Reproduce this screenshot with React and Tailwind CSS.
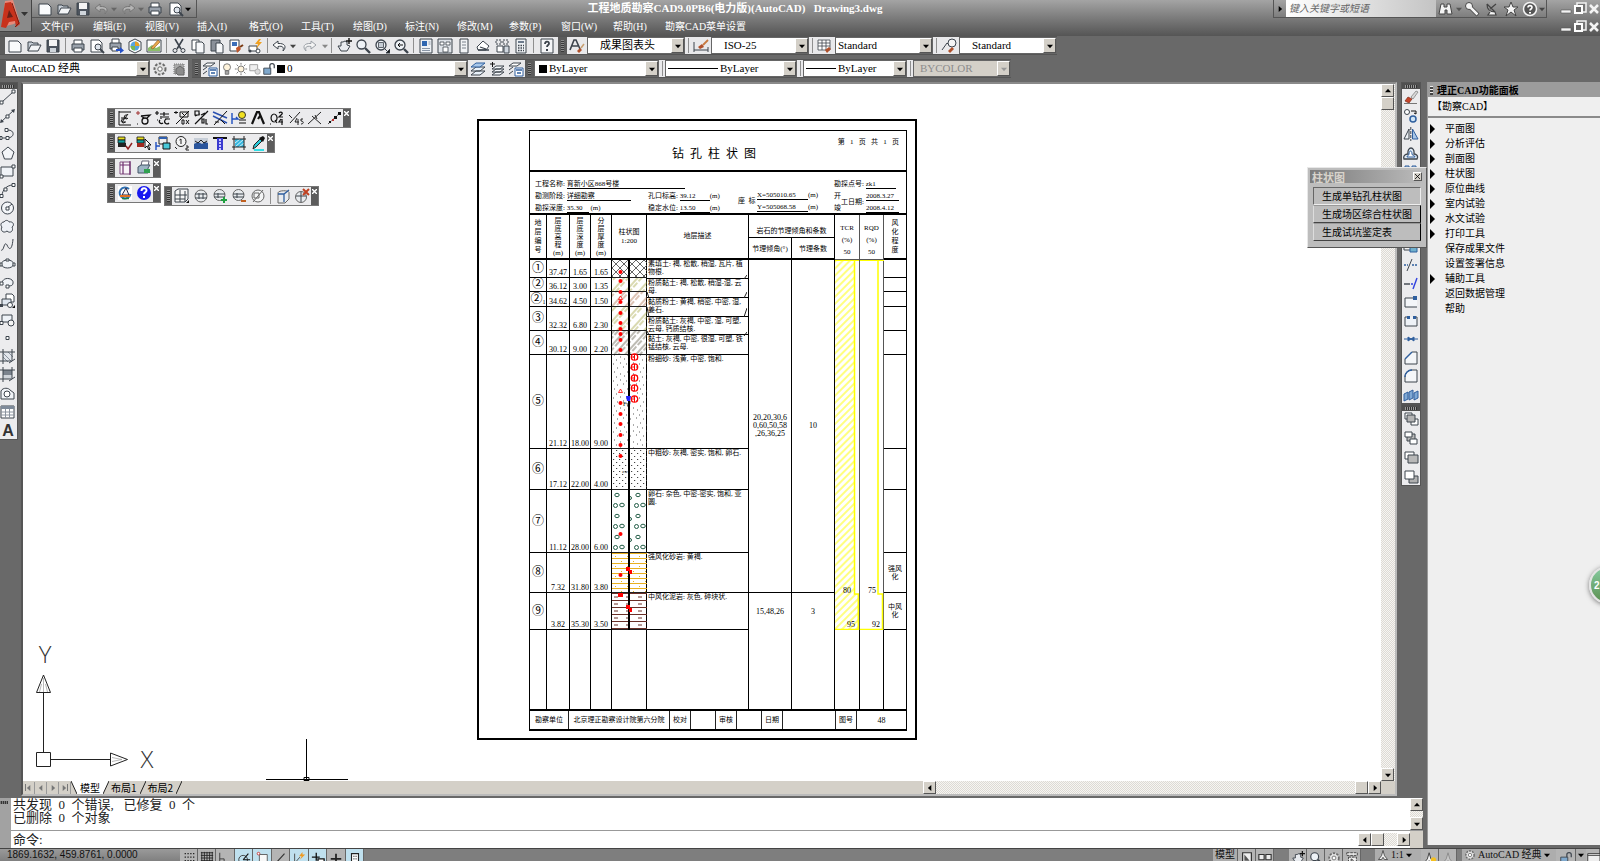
import React from "react";

const D = "#3d444d";
const B = "#2f5f9e";
const L = "#dfe5ec";
const F = "font-['Liberation_Serif','Noto_Sans_CJK_SC',serif]";

/* 16x16 tool glyphs */
const G = {
  new: <path d="M2 3h9l3 3v8H2z" fill="#fafbfc" stroke={D} />,
  open: <><path d="M2 13V4h4l1 1h5v2" fill="#c9d0d8" stroke={D} /><path d="M2 13l3-6h10l-3 6z" fill="#f3f5f7" stroke={D} /></>,
  save: <><path d="M2 2h12v12H2z" fill="#4d545e" stroke={D} /><path d="M4 2h8v6H4z" fill="#f4f4f4" /><path d="M5 10h6v4H5z" fill="#cfd5db" /></>,
  print: <><path d="M4 2h8v5H4z" fill="#fff" stroke={D} /><path d="M2 6h12v6H2z" fill="#9aa2ac" stroke={D} /><path d="M4 10h8v4H4z" fill="#fff" stroke={D} /></>,
  preview: <><path d="M2 2h8l3 3v9H2z" fill="#fff" stroke={D} /><circle cx="9" cy="9" r="3" fill={L} stroke={D} /><path d="M11 11l4 4" stroke={D} strokeWidth="2" /></>,
  publish: <><path d="M4 1h7v5H4z" fill="#fff" stroke={D} /><path d="M2 5h11v6H2z" fill="#9aa2ac" stroke={D} /><path d="M4 9h6v4H4z" fill="#fff" stroke={D} /><path d="M8 11h4V9l4 3.500-4 3V13H8z" fill="#2450c8" /></>,
  globe: <><path d="M2 4l6-3 6 3v8l-6 3-6-3z" fill="#fff" stroke={D} /><circle cx="8" cy="8" r="4.500" fill="#58a4e0" /><path d="M8 8V3.500A4.500 4.500 0 0 1 12.500 8z" fill="#e8a020" /><path d="M8 8v4.500A4.500 4.500 0 0 1 3.500 8z" fill="#7bb852" /></>,
  markup: <><path d="M1 2h14v12H1z" fill="#fff" stroke={D} /><path d="M2 10l4-3 4 3 4-2v5H2z" fill="#8dbf6a" /><path d="M5 10l7-8 2 2-7 7z" fill="#e8a84c" stroke="#8a5a20" strokeWidth=".6" /></>,
  cut: <><path d="M4 1l6 10M12 1L6 11" stroke={D} strokeWidth="1.600" /><circle cx="4" cy="12.500" r="2" fill="none" stroke={D} /><circle cx="12" cy="12.500" r="2" fill="none" stroke={D} /></>,
  copy: <><path d="M2 2h7v10H2z" fill="#fff" stroke={D} /><path d="M6 4h6l2 2v9H6z" fill="#f7f8fa" stroke={D} /></>,
  paste: <><path d="M2 2h9v11H2z" fill="#8a9099" stroke={D} /><path d="M7 5h5l2 2v8H7z" fill="#f7f8fa" stroke={D} /></>,
  match: <><path d="M2 2h9v11H2z" fill="#fff" stroke={D} /><path d="M4 4h5v4H4z" fill="#3c6eb8" /><path d="M8 10l3-2 2 3-4 4z" fill="#c2562a" /><path d="M12 9l3-2" stroke="#7a3a12" strokeWidth="2" /></>,
  block: <><path d="M2 8h8v5H2z" fill="#fff" stroke={D} /><circle cx="11" cy="13" r="2" fill="#fff" stroke={D} /><circle cx="3" cy="13" r="1.500" fill={D} /><path d="M12 1l-4 5h3l-2 5 6-7h-3l2-3z" fill="#f0a020" /></>,
  undo: <path d="M6 3L1 7l5 4V8.500c5-1 6 1 5 4.500 4-4 2-8-5-7.500z" fill="#fafafa" stroke={D} />,
  redo: <path d="M10 3l5 4-5 4V8.500c-5-1-6 1-5 4.500-4-4-2-8 5-7.500z" fill="#f4f4f4" stroke="#9a9fa6" />,
  undog: <path d="M6 3L1 7l5 4V8.500c5-1 6 1 5 4.500 4-4 2-8-5-7.500z" fill="#b4b4b4" stroke="#777" />,
  redog: <path d="M10 3l5 4-5 4V8.500c-5-1-6 1-5 4.500-4-4-2-8 5-7.500z" fill="#b4b4b4" stroke="#777" />,
  pan: <><path d="M2 8l3 5h6l3-5-3-1V4L9 3 7 4 5 4v4z" fill="#e8ebef" stroke={D} /><path d="M10 3h6M13 0v6" stroke="#111" strokeWidth="1.400" /></>,
  zoom: <><circle cx="6.500" cy="6.500" r="4.500" fill="#eef2f6" stroke={D} strokeWidth="1.300" /><path d="M10 10l5 5" stroke={D} strokeWidth="2.400" /></>,
  zoomw: <><circle cx="7" cy="7" r="5" fill="#eef2f6" stroke={D} strokeWidth="1.300" /><path d="M4.500 4.500h5v5h-5z" fill="#c7ced6" stroke={D} strokeWidth=".8" /><path d="M11 11l2 2M12 15h4v-4z" stroke={D} fill="#111" /></>,
  zoomp: <><circle cx="7" cy="7" r="5" fill="#eef2f6" stroke={D} strokeWidth="1.300" /><path d="M10 7H5l2-2M5 7l2 2" stroke="#111" fill="none" /><path d="M11 11l4 4" stroke={D} strokeWidth="2.400" /></>,
  props: <><path d="M2 1h12v14H2z" fill="#eef1f5" stroke={D} /><path d="M4 3h5v5H4z" fill="#2f66b0" /><path d="M10.500 4h2M10.500 6h2M4 10.500h8M4 12.500h8" stroke="#8a96a6" /></>,
  center: <><path d="M1 1h14v14H1z" fill="#dfe3e8" stroke={D} /><path d="M3 4h4v3H3zM9 4h4v3H9zM6 9h5v5H6z" fill="#fff" stroke={D} strokeWidth=".8" /></>,
  palette: <><path d="M4 1h8v14H4z" fill="#f1f3f5" stroke={D} /><path d="M6 4h4M6 7h4M6 10h4" stroke="#7a828c" /></>,
  sheet: <><path d="M2 9l6-6 6 5-3 4H3z" fill="#fff" stroke={D} /><path d="M3 12h11M5 9l6 2" stroke={D} strokeWidth="1.300" /></>,
  tree: <><path d="M2 2h5v4H2zM9 2h5v4H9z" fill="none" stroke={D} strokeDasharray="2 1" /><path d="M3 8h6v6H3z" fill="#fff" stroke={D} /><path d="M10 8h5v7h-5z" fill="#cfd6de" stroke={D} /></>,
  calc: <><path d="M3 1h10v14H3z" fill="#eef1f4" stroke={D} /><path d="M5 3h6v2H5z" fill="#6c7a8c" /><path d="M5 7.500h6M5 10h6M5 12.500h6" stroke={D} strokeDasharray="1.500 1" strokeWidth="1.400" /></>,
  helpbox: <><path d="M2 1h12v14H2z" fill="#f5f6f8" stroke={D} /><path d="M6 6c0-3 4-3 4-.6 0 1.600-2 1.600-2 3.600" stroke={D} strokeWidth="1.800" fill="none" /><path d="M7 11h2v2H7z" fill={D} /></>,
  tstyle: <><path d="M1 12L5 2h2l4 9M3 8h6" stroke={D} fill="none" strokeWidth="1.600" /><path d="M8 13l3-3 2 2-3 3z" fill="#b0502a" /><path d="M12 10l3-4" stroke="#c8a070" strokeWidth="1.500" /></>,
  dstyle: <><path d="M1 4v10M15 9v5M1 12h14" stroke={D} /><path d="M5 9l4-3 2 3-4 2z" fill="#b0502a" /><path d="M10 7l5-5" stroke="#c87a40" strokeWidth="1.800" /></>,
  tbstyle: <><path d="M1 2h12v10H1zM1 5h12M1 8h12M5 2v10M9 2v10" fill="#fff" stroke={D} strokeWidth=".8" /><path d="M8 12l4-3 2 2-4 4z" fill="#b0502a" /></>,
  mstyle: <><circle cx="11" cy="5" r="4" fill="#f5f5f5" stroke={D} /><path d="M1 12l5-7 2 2" fill="none" stroke={D} /><path d="M7 13l4-4 2 2-4 4z" fill="#b0502a" /></>,
  gear: <><circle cx="8" cy="8" r="5.500" fill="#e2e2e2" stroke="#6b6b6b" strokeWidth="2" strokeDasharray="2.500 1.500" /><circle cx="8" cy="8" r="2.200" fill="#fff" stroke="#6b6b6b" /></>,
  wsp: <><path d="M3 3h10v10H3z" fill="#a8a8a8" stroke="#777" strokeDasharray="1 1" /><path d="M5 12V8l4-3 4 3v6H7z" fill="#8c8c8c" stroke="#666" /></>,
  layerp: <><path d="M1 5l4-3h8l-4 3zM1 9l4-3M1 13l4-3" fill="#fff" stroke={D} /><path d="M7 7h8v8H7z" fill="#fff" stroke={B} /><path d="M8 9h6M9 12h4" stroke={B} strokeWidth="1.400" /></>,
  layers: <><path d="M1 14l5-4h9l-5 4zM1 10l5-4h9l-5 4z" fill="#e9f1fa" stroke={D} /><path d="M1 6l5-4h9l-5 4z" fill="#a9c8ea" stroke={B} /></>,
  layerb: <><path d="M3 14l4-3h8l-4 3zM3 11l4-3h8l-4 3zM3 8l4-3h8l-4 3z" fill="#f5f8fb" stroke={D} /><path d="M1 3h5M3.500 1v5" stroke="#111" /></>,
  bulb: <><circle cx="8" cy="6" r="4" fill="#fff4dc" stroke="#6a6a6a" /><path d="M6 10h4v4H6z" fill="#a8a8a8" stroke="#6a6a6a" /></>,
  sun: <><circle cx="8" cy="8" r="3.500" fill="#fff4dc" stroke="#666" /><path d="M8 1v2M8 13v2M1 8h2M13 8h2M3 3l1.500 1.500M11.500 11.500L13 13M13 3l-1.500 1.500M4.500 11.500L3 13" stroke="#666" /></>,
  vp: <><path d="M2 3h9v7H2z" fill="#eee" stroke="#999" /><circle cx="11" cy="11" r="3" fill="#ddd" stroke="#aaa" /></>,
  unlock: <><path d="M2 7h8v7H2z" fill="#7fa8cc" stroke={D} /><path d="M9 7V4c0-3 5-3 5 0v3" fill="none" stroke={D} strokeWidth="1.400" /></>,
  /* draw */
  line: <><path d="M2 13L13 3" stroke={D} /><path d="M0 12h3v3H0zM12 1h3v3h-3z" fill="#fff" stroke={D} /></>,
  xline: <><path d="M1 14L14 2" stroke={D} /><path d="M0 15l1-4 3 3zM15 1l-4 1 3 3z" fill={D} /><path d="M6 7h3v3H6z" fill="#fff" stroke={D} /></>,
  pline: <><path d="M0 12h7c8 0 8-8 1-8" fill="none" stroke={D} /><path d="M6 10.500h3v3H6zM5 2.500h3v3H5zM0 10.500h2v3H0z" fill="#fff" stroke={D} /></>,
  poly: <path d="M8 2l6 5-2.500 7h-7L2 7z" fill="#f4f6f9" stroke={D} />,
  rect: <><path d="M1 4h12v9H1z" fill="#f0f3f7" stroke={D} /><path d="M0 12h3v3H0zM12 2h3v3h-3z" fill="#fff" stroke={D} /></>,
  arc: <><path d="M2 14C2 8 7 3 13 3" fill="none" stroke={D} /><path d="M0 12.500h3v3H0zM12 1.500h3v3h-3zM4 6h3v3H4z" fill="#fff" stroke={D} /></>,
  circ: <><circle cx="7.500" cy="8" r="6" fill="#f4f6f9" stroke={D} /><path d="M7 8l5-4" stroke={D} /><path d="M6 7h3v3H6z" fill="#fff" stroke={D} /></>,
  cloud: <path d="M4 3c2-3 5-1 5 0 4-1 6 3 3 5 2 4-2 7-5 4-4 3-7-1-5-4-2-2-1-5 2-5z" fill="#eef1f6" stroke={D} />,
  spline: <path d="M1 13c3 2 3-10 6-5 2 5 5 6 6-6" fill="none" stroke={D} />,
  ell: <><ellipse cx="7.500" cy="8" rx="6" ry="4" fill="#f0f3f7" stroke={D} /><path d="M6 3h3v2H6zM0 7h2v3H0zM13 7h2v3h-2z" fill="#fff" stroke={D} /></>,
  ella: <><path d="M2 9C3 2 14 4 13 9c0 3-3 3-6 3" fill="#f0f3f7" stroke={D} /><path d="M0 8h3v3H0zM6 11h3v3H6z" fill="#fff" stroke={D} /></>,
  ins: <><path d="M6 1h6l2 2v6H6z" fill="#fff" stroke={D} /><path d="M2 6h9v6H2z" fill="#dfe6ef" stroke={D} /><circle cx="10" cy="12" r="2.500" fill="#fff" stroke={D} /><path d="M12 15h3v-3z" fill="#111" /><path d="M0 11h3v3H0z" fill={D} /></>,
  mkb: <><path d="M2 3h10v7H2z" fill="#eef2f7" stroke={D} /><circle cx="11" cy="11" r="3" fill="#f5f5f5" stroke={D} /><path d="M0 9.500h3v3H0z" fill="#fff" stroke={D} /></>,
  pt: <path d="M6 6.500h3v3H6z" fill="#fff" stroke={D} />,
  hatch: <><path d="M3 3h9v9H3z" fill="#e2e6ec" /><path d="M3 8l5 5M3 4l9 9M8 3l5 5" stroke="#8b949f" /><path d="M3 0v15M12 0v12M0 3h15M0 12h11M9 14l6-4" stroke={D} /></>,
  grad: <><path d="M3 3h9v5H3z" fill="#7b838d" /><path d="M3 8h9v4H3z" fill="#cfd4da" /><path d="M3 0v15M12 0v12M0 3h15M0 12h11M9 14l6-4" stroke={D} /></>,
  region: <><path d="M1 13V5c2-4 8-3 9-1l4 3v6z" fill="#f0f3f7" stroke={D} /><circle cx="7" cy="8" r="3" fill="#fff" stroke={D} /></>,
  table: <><path d="M1 2h13v12H1z" fill="#fff" stroke={D} /><path d="M1 2h13v3H1z" fill="#7f8b9a" /><path d="M1 8h13M1 11h13M5.500 5v9M9.500 5v9" stroke="#8b949f" /></>,
  /* modify */
  erase: <><path d="M8 8l5-6 2 1-5 7z" fill="#d9d9d9" stroke="#777" strokeWidth=".7" /><path d="M5 8l4 2-3 4-4-2z" fill="#c8452a" stroke="#7a2a18" strokeWidth=".7" /><path d="M1 14.500h13" stroke="#777" /></>,
  cpy: <><circle cx="4" cy="4" r="2.500" fill="#fff" stroke={D} /><path d="M8 3h5v3l-2-1" stroke="#111" fill="none" /><circle cx="10" cy="11" r="3" fill="#cfe4f6" stroke={B} strokeWidth="1.500" /></>,
  mirror: <><path d="M6 3v10H1z" fill="#eef2f6" stroke={D} /><path d="M9.500 3v10H15z" fill="#a8c6e8" stroke={B} /><path d="M7.800 1v14" stroke={D} strokeDasharray="3 1" /></>,
  offset: <><path d="M1 14h13c2-4-2-5-3-5 1-8-7-8-6 0-3 0-5 2-4 5z" fill="#dfe9f4" stroke={D} strokeWidth="1.300" /><path d="M4 12h8c0-2-3-1-3-3 0-4-3-4-3 0 0 2-2 1-2 3z" fill="#fff" stroke={B} /></>,
  array: <path d="M2 2h4v4H2zM9 2h4v4H9zM2 9h4v4H2zM9 9h4v4H9z" fill="#a9bdd4" stroke={B} />,
  move: <path d="M8 1v14M1 8h14M8 1L6 3h4zM8 15l-2-2h4z" stroke={B} fill={B} />,
  rotate: <path d="M13 8a5 5 0 1 1-5-5h4" fill="none" stroke={B} strokeWidth="1.500" />,
  scale: <path d="M2 6h8v8H2zM6 2h8v8" fill="#e4edf7" stroke={B} />,
  stretch: <><path d="M1 4h8v8H1z" fill="#f2f2f2" stroke={D} /><path d="M7 7l7-1v8H7z" fill="#6fb0cc" stroke={B} /></>,
  trim: <><path d="M1 8h4M9 8h6" stroke={B} strokeDasharray="2 1" strokeWidth="1.400" /><path d="M4 14l5-12" stroke={D} /></>,
  extend: <><path d="M1 9h6" stroke={D} strokeWidth="1.400" /><path d="M8 9h3" stroke="#3040e0" strokeDasharray="2 1" strokeWidth="1.400" /><path d="M10 14l4-11" stroke="#3040e0" strokeWidth="1.400" /></>,
  brkpt: <><path d="M14 4H2v9h12" fill="#f4f6f9" stroke={D} /><path d="M10 2h4v4h-4z" fill={B} /></>,
  brk: <><path d="M4 4H2v9h12V4h-2" fill="#eef2f7" stroke={D} /><path d="M4 3h3v3H4zM10 3h3v3h-3z" fill={B} /></>,
  join: <path d="M1 8h14M5 6v4l3-2zM11 6v4L8 8z" stroke={B} fill={B} />,
  chamfer: <><path d="M2 14V9l7-7h5v12z" fill="#f4f6f9" stroke={D} /><path d="M2 9l7-7" stroke={B} strokeWidth="1.500" /></>,
  fillet: <><path d="M2 14V9c0-4 3-7 7-7h5v12z" fill="#f4f6f9" stroke={D} /><path d="M2 9c0-4 3-7 7-7" stroke={B} strokeWidth="1.500" fill="none" /></>,
  explode: <path d="M1 7l4-2v7l-4 2zM6 5l4-2v8l-4 2zM11 6l4-2v7l-4 2z" fill="#7fa8d4" stroke={B} />,
  ord1: <><path d="M2 2h7v6H2z" fill="#fff" stroke={D} /><path d="M8 8h7v6H8z" fill="#fff" stroke={D} /><path d="M4 4h8v7H4z" fill="#b4b4b4" stroke={D} /></>,
  ord2: <><path d="M4 4h8v7H4z" fill="#b8b8b8" stroke={D} /><path d="M2 2h7v5H2zM7 9h7v5H7z" fill="#fff" stroke={D} /></>,
  ord3: <><path d="M2 2h9v7H2z" fill="#fff" stroke={D} /><path d="M5 5h10v8H5z" fill="#b8b8b8" stroke={D} /></>,
  ord4: <><path d="M6 7h9v7H6z" fill="#b0b0b0" stroke={D} /><path d="M2 2h9v8H2z" fill="#fff" stroke={D} /></>,
  /* survey bars */
  s1: <path d="M2 1v14h12M2 2h12M4 8h6M5 12h4M11 4l-6 8M10 5a2 2 0 1 0 1 3M7 9a2 2 0 1 0 1 3" fill="none" stroke="#111" strokeWidth="1" />,
  s2: <><path d="M5 6l9-1-3 3M5 6l3 2" fill="none" stroke="#111" strokeWidth="1.300" /><circle cx="9" cy="11" r="3" fill="none" stroke="#111" strokeWidth="1.300" /><path d="M2 1v4M0 3h4" stroke="#a03030" /><path d="M1 14h1" stroke="#111" /></>,
  s3: <path d="M2 1v4M0 3h4M5 4h9M7 7h7M2 10h1M6 6v3M9 2v4M5 10a2 2 0 1 0 3 3M13 9a2.500 2.500 0 1 0 1 4M10 9h5" fill="none" stroke="#111" strokeWidth="1.200" />,
  s4: <path d="M2 1v3M0 2.500h4M6 2h8v5H6zM8 3l3 3M15 1L2 14M8 10v4h2v-4zM12 10l3 4M15 10l-3 4" fill="none" stroke="#111" />,
  s5: <path d="M2 1h4v4H2zM2 6l5-2M15 1L2 14M9 9v4h2V9zM13 9v5h2M8 5l4-2" fill="none" stroke="#111" strokeWidth="1.200" />,
  s6: <><path d="M1 2l14 6M1 6l14 7" stroke="#2a50b0" strokeWidth="1.500" /><path d="M15 1L2 15M3 12h4M9 10l4 4" stroke="#111" /></>,
  s7: <><circle cx="11" cy="5" r="3.500" fill="#f0e020" stroke="#333" /><path d="M1 3v11M1 9h6l-2-2" stroke="#2050c0" fill="none" strokeWidth="1.400" /><path d="M8 10h7M8 13h7" stroke="#111" /></>,
  s8: <path d="M2 14L7 2h2l5 12M10 6l-2 3" fill="none" stroke="#111" strokeWidth="2.200" />,
  s9: <path d="M5 4a3 4 0 1 0 .1 0M6 10l2 3M10 3c2-2 4 0 3 1l-3 3h4M12 9l-2 3h4M13 9v6M1 14h1" stroke="#111" strokeWidth="1.200" />,
  s10: <path d="M2 13L12 2M1 5l3 3M9 8l-2 4h4M10 9v6M15 9h-2v2c3 0 3 3 0 3" stroke="#222" />,
  s11: <path d="M1 14L14 2M5 6l9 8M8 5l2 4" stroke="#222" fill="none" />,
  s12: <><path d="M2 14L15 2" stroke="#555" strokeDasharray="2 1" /><path d="M3 11h2v2H3zM8 6h3v3H8zM12 2h3v3h-3z" fill="#111" /><path d="M6 9h2v2H6z" fill="#c03030" /></>,
  t1: <><path d="M1 2h7v3H1z" fill="#e8e020" stroke="#111" strokeWidth=".8" /><path d="M1 5h7v3H1z" fill="#10a0a0" stroke="#111" strokeWidth=".8" /><path d="M1 8h8v4H1z" fill="#222" /><path d="M9 11l2 3 4-6" stroke="#902020" fill="none" strokeWidth="1.500" /></>,
  t2: <><path d="M1 2h7v3H1z" fill="#e8e020" stroke="#111" strokeWidth=".8" /><path d="M1 5h7v3H1z" fill="#10a0a0" stroke="#111" strokeWidth=".8" /><path d="M1 8h7v4H1z" fill="#a02a20" /><path d="M9 4v9l2-2 2 4 1-1-2-4h3z" fill="#fff" stroke="#111" /></>,
  t3: <><path d="M4 2h8v7H4z" fill="#eee" stroke="#222" /><path d="M4 2h8v2H4z" fill="#3060b0" /><path d="M8 8h7v6H8z" fill="#48c8d8" stroke="#111" /><path d="M1 7v8M1 11h4" stroke="#2050c0" strokeWidth="1.400" /></>,
  t4: <><circle cx="7" cy="6.500" r="5" fill="#f4f4f4" stroke="#222" /><path d="M7 4v5M5.500 5L7 4M1 12l2 2" stroke="#222" fill="none" /><path d="M12 11h2v2h-2v2h3" stroke="#222" fill="none" /></>,
  t5: <><path d="M1 3h14v11H1z" fill="#2a559c" /><path d="M1 3h14v5l-3-1-3 2-4-2-4 2z" fill="#c8cfd8" /><path d="M2 6l3 2 3-3 3 3 3-2" stroke="#222" fill="none" /></>,
  t6: <><path d="M1 3h14" stroke="#111" strokeWidth="2" /><path d="M5 3h6v12H5z" fill="#3a3ad0" /><path d="M8 4v11" stroke="#c8c8ff" strokeDasharray="2 1" strokeWidth="2" /></>,
  t7: <><path d="M4 4h9v8H4z" fill="#38b8e0" /><path d="M4 12l9-8M4 8l5-4M8 12l5-4" stroke="#fff" strokeWidth=".8" /><path d="M3 1v14M13 1v14M1 4h14M1 12h14" stroke="#222" /></>,
  t8: <><path d="M4 15h10" stroke="#30e0e8" strokeWidth="2" /><path d="M3 14l1-4 6-6 2 2-6 6z" fill="#28c8d8" stroke="#222" /><path d="M9 3l4-2 2 2-2 4z" fill="#111" /></>,
  u1: <><path d="M3 2h10v12H3z" fill="#f8f4f8" stroke="#805080" /><path d="M6 2v12M3 5h10M13 1v14" stroke="#703070" strokeWidth="1.200" /></>,
  u2: <><path d="M6 1h7l-1 5H5z" fill="#fff" stroke="#667" /><path d="M2 7l3-2h9l-2 3v5H2z" fill="#9cb4c4" stroke="#456" /><path d="M8 9h6v4H8z" fill="#30a050" /></>,
  u3: <><path d="M1 1h14v14H1z" fill="#fff" /><path d="M12 4A5.500 5.500 0 1 0 13.500 9" fill="none" stroke="#3070b0" strokeWidth="2" /><path d="M5 10l4-7 3 7z" fill="#f2f2f2" stroke="#224" /><path d="M3 11h10" stroke="#e07020" strokeWidth="2" /><path d="M5 13.500h7" stroke="#208040" strokeWidth="1.500" /></>,
  u4: <><circle cx="8" cy="8" r="7" fill="#1818f0" /><path d="M5.500 6c0-3.500 5-3.500 5-.6 0 1.800-2.500 2-2.500 3.800" stroke="#fff" strokeWidth="2" fill="none" /><path d="M7 11h2v2H7z" fill="#fff" /></>,
  m1: <><path d="M1 3l3-2h10v10l-3 3H1z" fill="#f5f5f5" stroke={D} /><path d="M6 2v12M11 3v11M1 7h12M1 11h10" stroke={D} /><path d="M12 15h3v-3z" fill="#111" /></>,
  m2: <><circle cx="8" cy="8" r="6" fill="#e8ebee" stroke="#666" /><path d="M2 6h12M2 10h12M6 5v6M10 5v6" stroke={D} /></>,
  m3: <><circle cx="7.500" cy="7" r="5.500" fill="#e8ebee" stroke="#666" /><path d="M2 6h11M2 9h11M6 5v5" stroke={D} /><path d="M9 12h6M12 9v6" stroke="#20a040" strokeWidth="2" /></>,
  m4: <><circle cx="7.500" cy="7" r="5.500" fill="#e8ebee" stroke="#666" /><path d="M2 6h11M2 9h11M6 5v5" stroke={D} /><path d="M10 13h5" stroke="#c06020" strokeWidth="2" /></>,
  m5: <><circle cx="8" cy="8" r="6" fill="#f4f5f6" stroke="#666" /><path d="M13 2L3 14M4 5h5v5H4z" stroke="#666" fill="none" /></>,
  m6: <><path d="M3 5c0-3 12-3 11 0v6l-4 4H3z" fill="#e8ebee" stroke="#666" /><path d="M3 6h6l5-4M9 6v8" stroke={B} strokeWidth="1.300" fill="none" /></>,
  m7: <><circle cx="7" cy="9" r="5.500" fill="#e8ebee" stroke="#666" /><path d="M2 8h10M7 4v10" stroke={D} /><path d="M9 1l6 6M15 1L9 7" stroke="#c04020" strokeWidth="2" /></>,
  /* title bar */
  binoc: <path d="M3 3h3v3h3V3h3l2 10H9V9H7v4H1z" fill="#f4f4f4" stroke="#444" />,
  key: <><circle cx="5" cy="5" r="3.500" fill="#f4f4f4" stroke="#444" /><path d="M7 7l7 7" stroke="#444" strokeWidth="4" /><path d="M6 6l7.500 7.500" stroke="#f4f4f4" strokeWidth="2.500" /></>,
  dish: <path d="M3 3c0 6 3 8 8 8l1 3H4l2-3M6 8l6-5M3 3l8 8" fill="#f4f4f4" stroke="#444" strokeWidth="1.200" />,
  star: <path d="M8 1l2 5h5l-4 3 2 6-5-4-5 4 2-6-4-3h5z" fill="#f4f4f4" stroke="#444" />,
  qm: <><circle cx="8" cy="8" r="6.500" fill="#555" stroke="#f4f4f4" strokeWidth="1.500" /><path d="M6 6.500c0-2.500 4-2.500 4 0 0 1.500-2 1.500-2 3" stroke="#fff" strokeWidth="1.600" fill="none" /><path d="M7 11h2v1.500H7z" fill="#fff" /></>,
  min: <path d="M3 9h10v3H3z" fill="#f4f4f4" stroke="#555" strokeWidth=".6" />,
  max: <><path d="M5 2h9v9H5z" fill="#777" stroke="#f4f4f4" strokeWidth="1.500" /><path d="M3 5h7v7H3z" fill="#666" stroke="#fff" strokeWidth="2" /></>,
  x: <path d="M4 4l8 8M12 4l-8 8" stroke="#f4f4f4" strokeWidth="2.500" />,
  /* status */
  snap: <path d="M3 3h12M3 7h12M3 11h12M3 15h12" stroke="#222" strokeWidth="1.500" strokeDasharray="1.500 1.700" />,
  grid: <path d="M1 2h14M1 5h14M1 8h14M1 11h14M1 14h14M2 1v14M5 1v14M8 1v14M11 1v14M14 1v14" stroke="#222" />,
  ortho: <path d="M2 2v12h12M2 9h5v5" fill="none" stroke="#333" />,
  polar: <><circle cx="7" cy="10" r="5" fill="none" stroke="#333" /><path d="M7 10l6-7M7 10h8" stroke="#111" strokeWidth="1.300" /></>,
  osnap: <><path d="M5 4h9v11H5z" fill="#f8f8f8" stroke="#555" /><circle cx="4" cy="3" r="1.500" fill="#fff" stroke="#c03030" /></>,
  otrack: <path d="M2 14L12 3M2 14h12" stroke="#333" fill="none" strokeWidth="1.300" />,
  ducs: <><path d="M3 3v11h9M3 14l6-7" stroke="#444" fill="none" /><path d="M12 1l-4 5h3l-2 4 6-6h-3z" fill="#f09a20" /></>,
  dyn: <path d="M6 2v9M1 7h9M8 9h7v4H8z" stroke="#111" fill="#fff" strokeWidth="1.500" />,
  lwt: <path d="M8 3v9M2 9h12" stroke="#222" strokeWidth="2" />,
  qp: <><path d="M4 3h8v11H4z" fill="#fff" stroke="#222" strokeWidth="1.300" /><path d="M6 6h4M6 9h4M6 12h4" stroke="#222" strokeDasharray="1.500 1" /></>,
  layo: <><path d="M3 2h10v11H3z" fill="#eee" stroke="#333" strokeWidth="1.400" /><path d="M5 4l6 7H5z" fill="#555" /></>,
  lays: <path d="M1 4h6v6H1zM9 4h6v6H9zM1 12h14" fill="#eee" stroke="#333" strokeWidth="1.300" />,
  show: <path d="M2 2h12v3H2zM4 7h9v8H4zM7 9v4l3-2z" fill="#eee" stroke="#333" strokeDasharray="3 1" />,
  ann: <path d="M8 2l-2 7-4 5h4l2-3 2 3h4l-4-5z" fill="#f4f4f4" stroke="#333" />,
  annb: <><path d="M7 2L5 9l-4 5h4l2-3 2 3h4L9 9z" fill="#f4f4f4" stroke="#333" /><circle cx="12" cy="10" r="3" fill="#f4c020" /></>,
  anng: <path d="M8 2L6 9l-4 5h4l2-3 2 3h4l-4-5z" fill="#c8c8c8" stroke="#888" />,
  clean: <path d="M2 3h14v11H2zM2 5h14" fill="#eee" stroke="#333" />,
};

const Icon = ({ n, s = "size-4" }) => (
  <svg viewBox="0 0 16 16" className={`${s} shrink-0`} fill="none" aria-hidden="true">{G[n]}</svg>
);
const Tool = ({ n, w = "w-[19px]" }) => (
  <button type="button" aria-label={n} className={`flex ${w} shrink-0 items-center justify-center`}><Icon n={n} /></button>
);
const Sep = () => <span className="my-px mr-[2px] ml-[3px] w-px shrink-0 self-stretch bg-[#8f8f8f]" />;
const Grip = () => (
  <span className="flex w-[9px] shrink-0 items-center justify-center self-stretch bg-[#5c5c5c]">
    <span className="h-3 w-[3px] bg-[repeating-linear-gradient(#8a8a8a_0_1px,#3a3a3a_1px_2px)]" />
  </span>
);
const Tri = ({ d = "down", c = "fill-black" }) => {
  const p = { down: "M0 2h7L3.500 6z", up: "M0 5h7L3.500 1z", left: "M5 0v7L1 3.500z", right: "M2 0v7l4-3.500z" }[d];
  return <svg viewBox="0 0 7 7" className={`size-[6px] shrink-0 ${c}`} aria-hidden="true"><path d={p} /></svg>;
};
const raised = "border border-t-white border-l-white border-r-[#555] border-b-[#555] bg-[#d4d0c8]";
const dither = "bg-[repeating-conic-gradient(#f6f5f2_0_25%,#dddad4_0_50%)] bg-[length:2px_2px]";
const Arrow = ({ d }) => (
  <button type="button" aria-label={`scroll ${d}`} className={`flex size-[13px] shrink-0 items-center justify-center ${raised}`}><Tri d={d} /></button>
);

const Combo = ({ label, value, w, lead, pad = "pl-2", off }) => (
  <span className={`flex h-[17px] shrink-0 items-center border border-[#666] ${w} ${off ? "bg-[#d4d0c8] text-[#8c8c8c]" : "bg-white text-black"}`}>
    {lead}
    <select aria-label={label} disabled={off} defaultValue={value} className={`h-full min-w-0 flex-1 appearance-none bg-transparent text-[11px] leading-[15px] opacity-100 outline-none ${pad} ${F}`}>
      <option>{value}</option>
    </select>
    <span className={`flex h-full w-[13px] items-center justify-center ${raised}`}><Tri c={off ? "fill-[#999]" : "fill-black"} /></span>
  </span>
);

const menus = ["文件(F)", "编辑(E)", "视图(V)", "插入(I)", "格式(O)", "工具(T)", "绘图(D)", "标注(N)", "修改(M)", "参数(P)", "窗口(W)", "帮助(H)", "勘察CAD菜单设置"];

const WinButtons = () => (
  <div className="flex w-[53px] shrink-0 items-center gap-px pl-3">
    {["min", "max", "x"].map((n) => <Tool key={n} n={n} w="w-[13px]" />)}
  </div>
);

function Header() {
  return (
    <header className="flex h-9 shrink-0 bg-gradient-to-b from-[#a4a4a4] to-[#555] text-white">
      <button type="button" aria-label="应用程序菜单" className="flex h-8 w-8 shrink-0 items-center border-r border-b border-[#444] bg-[#8a8a8a]">
        <svg viewBox="0 0 30 32" className="h-8 w-[30px]" aria-hidden="true">
          <path d="M5 1l8-1 6 20-5 4-12 3z" fill="#e88a7a" />
          <path d="M5 3L1 27l5 1 3-6 6-1 1 6 4-3L11 2z" fill="#c8321c" />
          <path d="M9 10l-2 8 6-1z" fill="#6a2018" />
          <path d="M15 27l4-4-7-20" fill="none" stroke="#7a1c10" />
          <path d="M21 12h7l-3.500 4z" fill="#333" />
        </svg>
      </button>
      <div className="flex min-w-0 flex-1 flex-col">
        <div className="flex h-[18px] items-stretch">
          <div className="flex w-[165px] shrink-0 items-center border-r border-b border-[#555] pl-[3px]">
            <Tool n="new" /><Tool n="open" /><Tool n="save" /><Tool n="undog" /><Tri c="fill-[#666]" />
            <Tool n="redog" w="w-[21px]" /><Tri c="fill-[#666]" /><Tool n="print" w="w-[22px]" /><Tool n="preview" /><Tri />
          </div>
          <h1 className={`flex-1 text-center text-[11px] leading-[17px] font-bold whitespace-pre ${F}`}>工程地质勘察CAD9.0PB6(电力版)(AutoCAD)   Drawing3.dwg</h1>
          <form className="flex w-[274px] shrink-0 items-center border border-t-0 border-[#555]">
            <span className="flex w-3 justify-center"><Tri d="right" /></span>
            <input aria-label="搜索" placeholder="键入关键字或短语" className={`h-full w-[150px] bg-gradient-to-r from-white to-[#c4c4c4] pl-[3px] text-[10px] italic placeholder:text-[#666] ${F}`} />
            <Tool n="binoc" w="w-[20px]" /><Tri c="fill-[#555]" /><Tool n="key" w="w-[20px]" /><Tool n="dish" /><Tool n="star" /><Tool n="qm" /><Tri c="fill-[#444]" />
          </form>
          <WinButtons />
        </div>
        <div className="flex h-[18px] items-center">
          <nav className={`flex flex-1 pl-[9px] text-[10px] leading-4 ${F}`}>
            {menus.map((m) => <button type="button" key={m} className="min-w-[52px] text-left whitespace-nowrap">{m}</button>)}
          </nav>
          <WinButtons />
        </div>
      </div>
    </header>
  );
}

const Bar = ({ children }) => <div className="flex h-[19px] items-center border-y border-[#555] bg-[#e9e9eb]">{children}</div>;
const Tools = ({ names }) => names.map((n) => <Tool key={n} n={n} />);

function Toolbars() {
  return (
    <div className="flex shrink-0 flex-col gap-[4px] pb-[4px]">
      <div className="flex">
        <Bar>
          <span className="w-[5px] self-stretch bg-[#5c5c5c]" />
          <Tools names={["new", "open", "save"]} /><Sep />
          <Tools names={["print", "preview", "publish", "globe", "markup"]} /><Sep />
          <Tools names={["cut", "copy", "paste", "match", "block"]} /><Sep />
          <Tool n="undo" w="w-[20px]" /><Tri c="fill-[#444]" /><Tool n="redo" w="w-[26px]" /><Tri c="fill-[#888]" /><Sep />
          <Tools names={["pan", "zoom", "zoomw", "zoomp"]} /><Sep />
          <Tools names={["props", "center", "palette", "sheet", "tree", "calc"]} /><Sep />
          <Tool n="helpbox" w="w-[22px]" />
        </Bar>
        <Bar>
          <Grip /><Tool n="tstyle" w="w-[20px]" /><Combo label="文字样式" value="成果图表头" w="w-[98px]" pad="pl-3" /><Sep />
          <Tool n="dstyle" w="w-[20px]" /><Combo label="标注样式" value="ISO-25" w="w-[98px]" pad="pl-3" /><Sep />
          <Tool n="tbstyle" w="w-[20px]" /><Combo label="表格样式" value="Standard" w="w-[98px]" pad="pl-[2px]" /><Sep />
          <Tool n="mstyle" w="w-[20px]" /><Combo label="引线样式" value="Standard" w="w-[98px]" pad="pl-3" />
        </Bar>
      </div>
      <div className="flex">
        <Bar>
          <span className="w-[5px] self-stretch bg-[#5c5c5c]" />
          <Combo label="工作空间" value="AutoCAD 经典" w="w-[145px]" pad="pl-1" />
          <Tool n="gear" /><Tool n="wsp" />
        </Bar>
        <span className="w-1" />
        <Bar>
          <Grip /><Tool n="layerp" w="w-[18px]" />
          <Combo label="图层" value="0" w="w-[249px]" pad="pl-[2px]" lead={<><Icon n="bulb" s="size-[14px]" /><Icon n="sun" s="size-[14px]" /><Icon n="vp" s="size-[14px]" /><Icon n="unlock" s="size-[14px]" /><span className="ml-px size-2 bg-black" /></>} />
          <Tools names={["layers", "layerb"]} /><Tool n="layerp" />
        </Bar>
        <Bar>
          <Grip />
          <Combo label="颜色" value="ByLayer" w="w-[125px]" pad="pl-[2px]" lead={<span className="ml-1 size-2 bg-black" />} /><Sep />
          <Combo label="线型" value="ByLayer" w="w-[132px]" pad="pl-[2px]" lead={<span className="ml-[2px] h-px w-[50px] bg-black" />} /><Sep />
          <Combo label="线宽" value="ByLayer" w="w-[104px]" pad="pl-[2px]" lead={<span className="ml-[2px] h-px w-[30px] bg-black" />} /><Sep />
          <Combo label="打印样式" value="BYCOLOR" w="w-[98px]" pad="pl-[6px]" off />
        </Bar>
      </div>
    </div>
  );
}

const VHead = () => (
  <span className="flex h-[6px] w-full items-center justify-center bg-[#505050]">
    <span className="h-[3px] w-3 bg-[repeating-linear-gradient(90deg,#999_0_1px,#333_1px_2px)]" />
  </span>
);
const VBar = ({ names, h }) => (
  <div className="flex flex-col border border-[#555] bg-[#ececee]">
    <VHead />
    <div className={`flex flex-col items-center justify-between ${h}`}>
      {names.map((n) => n === "A"
        ? <button type="button" key={n} className="font-['Liberation_Sans',sans-serif] text-[16px] leading-4 font-bold text-[#333]">A</button>
        : <Tool key={n} n={n} w="w-[15px]" />)}
    </div>
  </div>
);
const drawTools = ["line", "xline", "pline", "poly", "rect", "arc", "circ", "cloud", "spline", "ell", "ella", "ins", "mkb", "pt", "hatch", "grad", "region", "table", "A"];
const modTools = ["erase", "cpy", "mirror", "offset", "array", "move", "rotate", "scale", "stretch", "trim", "extend", "brkpt", "brk", "join", "chamfer", "fillet", "explode"];

const FloatBar = ({ names, pos }) => (
  <div className={`absolute ${pos} flex h-[20px] items-center border border-[#777] bg-[#ebebed]`}>
    <span className="flex w-[7px] items-center justify-center self-stretch bg-[#5c5c5c]"><span className="h-3 w-[3px] bg-[repeating-linear-gradient(#999_0_1px,#333_1px_2px)]" /></span>
    {names.map((n) => n === "|" ? <Sep key={n} /> : <Tool key={n} n={n} />)}
    <button type="button" aria-label="关闭" className="flex w-[7px] items-start justify-center self-stretch bg-[#5c5c5c] pt-[2px]">
      <svg viewBox="0 0 5 5" className="size-[5px]" aria-hidden="true"><path d="M0 0l5 5M5 0L0 5" stroke="#fff" strokeWidth="1.400" /></svg>
    </button>
  </div>
);

/* borehole log sheet */
const layers = [
  ["①", "", "37.47", "1.65", "1.65", "h-[18px]", ""],
  ["②", "", "36.12", "3.00", "1.35", "h-[14px]", ""],
  ["②", "1", "34.62", "4.50", "1.50", "h-[15px]", ""],
  ["③", "", "32.32", "6.80", "2.30", "h-[24px]", ""],
  ["④", "", "30.12", "9.00", "2.20", "h-[24px]", ""],
  ["⑤", "", "21.12", "18.00", "9.00", "h-[94px]", ""],
  ["⑥", "", "17.12", "22.00", "4.00", "h-[41px]", ""],
  ["⑦", "", "11.12", "28.00", "6.00", "h-[63px]", ""],
  ["⑧", "", "7.32", "31.80", "3.80", "h-[40px]", "强风化"],
  ["⑨", "", "3.82", "35.30", "3.50", "h-[37px]", "中风化"],
];
const notes = [
  [["素填土: 褐, 松散, 稍湿, 瓦片, 植", "物根."], "h-[19px]"],
  [["粉质黏土: 褐, 松散, 稍湿-湿, 云", "母."], "h-[19px]"],
  [["黏质粉土: 黄褐, 稍密, 中密, 湿,", "姜石."], "h-[19px]"],
  [["粉质黏土: 灰褐, 中密, 湿, 可塑,", "云母, 钙质结核."], "h-[18px]"],
  [["黏土: 灰褐, 中密, 很湿, 可塑, 铁", "锰结核, 云母."], "h-[20px]"],
  [["粉细砂: 浅黄, 中密, 饱和."], "h-[94px]"],
  [["中粗砂: 灰褐, 密实, 饱和, 卵石."], "h-[41px]"],
  [["卵石: 杂色, 中密-密实, 饱和, 亚", "圆."], "h-[63px]"],
  [["强风化砂岩: 黄褐."], "h-[40px]"],
  [["中风化泥岩: 灰色, 碎块状."], "h-[37px]"],
];

const diag = (id, color, g) => (
  <pattern id={id} width={g} height="8" patternUnits="userSpaceOnUse" patternTransform="rotate(42)">
    <path d="M1 0v8M4 0v6" stroke={color} strokeWidth=".8" />
  </pattern>
);
const dots = [12, 21, 32, 42, 53, 63, 69, 74, 80, 90, 143, 154, 164, 175, 185, 196, 274, 315];

const Lithology = () => (
  <svg viewBox="0 0 35 370" className="block h-[370px] w-[35px]" role="img" aria-label="柱状图">
    <defs>
      <pattern id="cross" width="8" height="8" patternUnits="userSpaceOnUse"><path d="M0 0l8 8M8 0L0 8" stroke="#555" strokeWidth=".9" /></pattern>
      {diag("olive", "#a0a038", 10)}
      {diag("brown", "#a86a44", 10)}
      {diag("dark", "#5a5440", 8)}
      <pattern id="fine" width="13" height="17" patternUnits="userSpaceOnUse"><path d="M1 2h1M8 1h1M5 6h1M11 5h1M2 10h1M8 12h1M4 15h1M12 14h1" stroke="#555" strokeWidth="1" /></pattern>
      <pattern id="coarse" width="6" height="6" patternUnits="userSpaceOnUse"><path d="M1 1.500h1.200M4 4.500h1.200" stroke="#444" strokeWidth="1.100" /></pattern>
      <pattern id="gravel" y="232" width="21" height="21" patternUnits="userSpaceOnUse">
        <g fill="none" stroke="#1f5a44" strokeWidth="1"><ellipse cx="5" cy="3" rx="2.200" ry="1.700" /><ellipse cx="3.500" cy="13.500" rx="2" ry="2" /><ellipse cx="10" cy="13" rx="2.300" ry="1.800" /><ellipse cx="18" cy="6" rx="1.500" ry="1.500" /></g>
      </pattern>
      <pattern id="sand" y="293" width="12" height="10" patternUnits="userSpaceOnUse"><path d="M0 .5h12M0 5.500h12" stroke="#e8b020" /><path d="M3 3.500h1M9 8.500h1" stroke="#e8b020" /></pattern>
      <pattern id="mud" y="333" width="12" height="7" patternUnits="userSpaceOnUse"><path d="M0 .5h12" stroke="#6a3028" strokeWidth="1" /><path d="M2 4h4" stroke="#6a3028" /></pattern>
    </defs>
    <rect y="0" width="35" height="18" fill="url(#cross)" /><rect y="18" width="35" height="14" fill="url(#olive)" />
    <rect y="32" width="35" height="15" fill="url(#brown)" /><rect y="47" width="35" height="24" fill="url(#olive)" />
    <rect y="71" width="35" height="24" fill="url(#dark)" /><rect y="95" width="35" height="94" fill="url(#fine)" />
    <rect y="189" width="35" height="41" fill="url(#coarse)" /><rect y="230" width="35" height="63" fill="url(#gravel)" />
    <rect y="293" width="35" height="40" fill="url(#sand)" /><rect y="333" width="35" height="37" fill="url(#mud)" />
    <path d="M0 17.500h35M0 31.500h35M0 46.500h35M0 70.500h35M0 94.500h35M0 188.500h35M0 229.500h35M0 292.500h35M0 332.500h35M0 369.500h35" stroke="#222" />
    <rect x="16" width="2" height="370" fill="#000" />
    {dots.map((y) => <circle key={y} cx="8.500" cy={y} r="2" fill="#f00" />)}
    <path d="M8.500 36l2 3.500h-4zM8.500 129l2 3.500h-4z" fill="#fff" stroke="#f00" strokeWidth=".8" />
    {[97, 107, 118, 128, 139].map((y) => <g key={y} fill="none" stroke="#f00"><circle cx="22.500" cy={y} r="3.200" strokeWidth="1.300" /><path d={`M22.500 ${y - 3}v6M20 ${y}h2`} /></g>)}
    <path d="M14 136h5l-1 5h-3z" fill="#22f" />
    <text x="11" y="146" fontSize="6" fontFamily="Liberation Serif">Fw</text>
    <text x="10" y="213" fontSize="5" fontFamily="Liberation Serif">zw</text>
    <path d="M14 307h4v3h2v4h-3v-3h-3zM6 333h5v4H6zM14 345h4v3h2v4h-3v-3h-3z" fill="#f00" />
  </svg>
);

const Curve = ({ a, b, hatched, id }) => (
  <svg viewBox="0 0 24 370" className="block h-[370px] w-[24px]" role="img" aria-label={id} fontFamily="Liberation Serif" fontSize="8" textAnchor="middle">
    {hatched && <defs><pattern id="yh" width="5" height="5" patternUnits="userSpaceOnUse" patternTransform="rotate(45)"><path d="M1 0v5" stroke="#ffff00" /></pattern></defs>}
    <path d={`M0 0H${a}V334H${b}V369.500H0`} fill={hatched ? "url(#yh)" : "none"} stroke="#ffff00" strokeWidth="1.500" />
    <path d="M0 .5h24" stroke="#ffff00" />
    <text x="12" y="333">{hatched ? "80" : "75"}</text>
    <text x="16" y="367">{hatched ? "95" : "92"}</text>
  </svg>
);

const V = ({ t, unit }) => (
  <div className={`flex flex-col items-center pt-px text-[7px] ${unit ? "leading-[8px]" : "leading-[9px]"}`}>
    {t.split("").map((c, i) => <span key={i}>{c}</span>)}
    {unit && <span>(m)</span>}
  </div>
);
const hd = "border-r border-b-2 border-black p-0 font-normal text-[7px] leading-[9px]";
const U = ({ w, children }) => <span className={`inline-block border-b border-black leading-[8px] whitespace-nowrap ${w}`}>{children}</span>;
const FCell = ({ w, children }) => <div className={`flex items-center justify-center border-r border-[#222] ${w}`}>{children}</div>;

function Sheet() {
  const pct = "border-r border-b border-[#555] p-0 pt-[6px] text-[7px] leading-[12px] font-normal";
  return (
    <article className={`absolute top-[35px] left-[454px] w-[440px] border-2 border-black bg-white pt-[9px] pr-[8px] pb-[7px] pl-[50px] text-black ${F}`}>
      <div className="border border-b-2 border-black text-[7px]">
        <div className="relative flex h-[41px] items-center justify-center border-b-2 border-black pt-[6px] pr-2">
          <h2 className="text-[12px] leading-4 whitespace-pre">钻  孔  柱  状  图</h2>
          <p className="absolute top-[6px] right-[7px] text-[7px] leading-[10px] whitespace-pre">第   1   页   共   1   页</p>
        </div>
        <div className="flex h-[43px] border-b-2 border-black pt-[6px] pl-[5px] text-[7px] leading-[12px] whitespace-nowrap">
          <div className="w-[113px]">
            <p>工程名称: <U w="w-[118px]">育新小区868号楼</U></p>
            <p>勘测阶段: <U w="w-[64px]">详细勘察</U></p>
            <p>勘探深度: <U w="w-[22px]">35.30</U> (m)</p>
          </div>
          <div className="w-[90px] pt-[12px]">
            <p>孔口标高: <U w="w-[30px]">39.12</U>(m)</p>
            <p>稳定水位: <U w="w-[30px]">13.50</U>(m)</p>
          </div>
          <div className="flex w-[96px] items-center pt-[11px] whitespace-pre">
            <span className="w-[19px]">座  标</span>
            <div><p><U w="w-[51px]">X=505010.65</U>(m)</p><p><U w="w-[51px]">Y=505068.58</U>(m)</p></div>
          </div>
          <div>
            <p>勘探点号: <U w="w-[30px]">zk1</U></p>
            <div className="flex items-center"><div><p>开</p><p>竣</p></div><span>工日期:</span><div className="pl-[2px]"><p><U w="w-[33px]">2008.3.27</U></p><p><U w="w-[33px]">2008.4.12</U></p></div></div>
          </div>
        </div>
        <table className="w-full table-fixed border-separate border-spacing-0 text-center">
          <colgroup>
            <col className="w-[17px]" /><col className="w-[23px]" /><col className="w-[21px]" /><col className="w-[21px]" /><col className="w-[35px]" /><col className="w-[102px]" />
            <col className="w-[43px]" /><col className="w-[43px]" /><col className="w-[25px]" /><col className="w-[24px]" /><col />
          </colgroup>
          <thead>
            <tr className="h-[23px]">
              <th rowSpan={2} className={hd}><V t="地层编号" /></th>
              <th rowSpan={2} className={hd}><V t="层底高程" unit /></th>
              <th rowSpan={2} className={hd}><V t="层底深度" unit /></th>
              <th rowSpan={2} className={hd}><V t="分层厚度" unit /></th>
              <th rowSpan={2} className={hd}>柱状图<br />1:200</th>
              <th rowSpan={2} className={hd}>地层描述</th>
              <th colSpan={2} className="border-r border-b border-black p-0 pb-px align-bottom text-[7px] leading-[10px] font-normal">岩石的节理倾角和条数</th>
              <th rowSpan={2} className={pct}>TCR<br />(%)<br />50</th>
              <th rowSpan={2} className={pct}>RQD<br />(%)<br />50</th>
              <th rowSpan={2} className="border-b-2 border-black p-0 font-normal"><V t="风化程度" /></th>
            </tr>
            <tr className="h-[22px]"><th className={`${hd} pt-[3px] whitespace-nowrap`}>节理倾角(°)</th><th className={`${hd} pt-[3px]`}>节理条数</th></tr>
          </thead>
          <tbody>
            {layers.map(([no, sub, e, d, t, h, w], i) => (
              <tr key={i} className={h}>
                <td className="border-r border-b border-black p-0 text-[12px] leading-[11px]">{no}{sub && <sub className="text-[6px] leading-none">{sub}</sub>}</td>
                {[e, d, t].map((v, k) => <td key={k} className="border-r border-b border-black p-0 align-bottom text-[8px] leading-[9px]">{v}</td>)}
                {i === 0 && <td rowSpan={10} className="border-r border-black p-0 align-top"><Lithology /></td>}
                {i === 0 && (
                  <td rowSpan={10} className="relative border-r border-black p-0 text-left align-top">
                    {notes.map(([ls, nh], k) => (
                      <div key={k} className={`border-b border-black pl-px text-[7px] leading-[8px] whitespace-nowrap ${nh}`}>{ls.map((l) => <p key={l}>{l}</p>)}</div>
                    ))}
                    <svg viewBox="0 0 100 95" className="absolute top-0 left-0 h-[95px] w-[100px]" fill="none" stroke="#222" aria-hidden="true"><path d="M97 19l3-4M97 38l3-6M97 57l3-9M97 76l3-4M0 32l2 6M0 47l2 10M0 71l2 4" /></svg>
                  </td>
                )}
                {i === 0 && <td rowSpan={9} className="border-r border-b border-black p-0 text-[8px] leading-[8px]">20,20,30,6<br />0,60,50,58<br />,26,36,25</td>}
                {i === 0 && <td rowSpan={9} className="border-r border-b border-black p-0 text-[8px]">10</td>}
                {i === 9 && <><td className="border-r border-black p-0 text-[8px]">15,48,26</td><td className="border-r border-black p-0 text-[8px]">3</td></>}
                {i === 0 && <td rowSpan={10} className="border-r border-[#555] p-0 align-top"><Curve a={19.5} b={23.3} hatched id="TCR" /></td>}
                {i === 0 && <td rowSpan={10} className="border-r border-[#555] p-0 align-top"><Curve a={18} b={22.5} id="RQD" /></td>}
                <td className="border-b border-black p-0 text-[7px] leading-[8px]">{w && <>{w.slice(0, 2)}<br />{w.slice(2)}</>}</td>
              </tr>
            ))}
            <tr className="h-[79px]">
              {Array.from({ length: 11 }, (_, k) => <td key={k} className={`p-0 ${k === 10 ? "" : "border-r border-black"}`} />)}
            </tr>
          </tbody>
        </table>
        <div className="flex h-[20px] border-t-2 border-black text-[7px] leading-[9px] whitespace-nowrap">
          <FCell w="w-[39px]">勘察单位</FCell><FCell w="w-[101px]">北京理正勘察设计院第六分院</FCell><FCell w="w-[21px]">校对</FCell><FCell w="w-[25px]" />
          <FCell w="w-[21px]">审核</FCell><FCell w="w-[25px]" /><FCell w="w-[21px]">日期</FCell><FCell w="w-[53px]" /><FCell w="w-[21px]">图号</FCell>
          <div className="flex flex-1 items-center justify-center text-[8px]">48</div>
        </div>
      </div>
    </article>
  );
}

function Palette() {
  const items = ["生成单钻孔柱状图", "生成场区综合柱状图", "生成试坑鉴定表"];
  return (
    <section className="absolute top-[83px] left-[1284px] z-10 w-[120px] border border-t-[#e8e8e8] border-r-[#555] border-b-[#555] border-l-[#e8e8e8] bg-[#bdbdbd] p-[2px] pb-[6px]">
      <header className="flex h-[13px] items-center justify-between bg-gradient-to-r from-[#7c7c7c] to-[#bcbcbc] px-[2px]">
        <h2 className="text-[11px] leading-3 font-bold text-[#d8d4cc]">柱状图</h2>
        <button type="button" aria-label="关闭" className={`flex size-[9px] items-center justify-center ${raised}`}><svg viewBox="0 0 5 5" className="size-[5px]" aria-hidden="true"><path d="M0 0l5 5M5 0L0 5" stroke="#000" strokeWidth=".8" /></svg></button>
      </header>
      <div className="mx-[3px] mt-1 flex flex-col">
        {items.map((t, i) => (
          <button type="button" key={t} className={`h-[18px] border pl-2 text-left text-[10px] leading-4 whitespace-nowrap ${i === 0 ? "border-t-[#666] border-r-[#eee] border-b-[#eee] border-l-[#666]" : "border-t-[#999] border-r-black border-b-[#444] border-l-[#ddd]"}`}>{t}</button>
        ))}
      </div>
    </section>
  );
}

const Tab = ({ on, children }) => (
  <button type="button" role="tab" aria-selected={!!on} className={`-mr-px flex h-[13px] items-center text-[10px] leading-3 whitespace-nowrap ${on ? "bg-white" : ""}`}>
    {on && <svg viewBox="0 0 6 13" className="h-[13px] w-[6px]" aria-hidden="true"><path d="M0 0v13h6z" fill="#d4d0c8" /><path d="M0 0l6 13" stroke="#222" /></svg>}
    <span className="px-[3px]">{children}</span>
    <svg viewBox="0 0 6 13" className="h-[13px] w-[6px]" aria-hidden="true"><path d="M6 0v13H0z" fill="#d4d0c8" /><path d="M0 13L6 0" stroke="#222" /></svg>
  </button>
);

function Viewport() {
  return (
    <section className="flex min-w-0 flex-1 flex-col border-2 border-t-[#8a8a8a] border-r-[#bbb] border-b-[#bbb] border-l-[#555]">
      <div className="flex min-h-0 flex-1">
        <div className="relative min-w-0 flex-1 bg-white">
          <FloatBar pos="top-[24px] left-[84px]" names={["s1", "s2", "s3", "s4", "s5", "s6", "s7", "s8", "s9", "s10", "s11", "s12"]} />
          <FloatBar pos="top-[49px] left-[84px]" names={["t1", "t2", "t3", "t4", "t5", "t6", "t7", "t8"]} />
          <FloatBar pos="top-[74px] left-[84px]" names={["u1", "u2"]} />
          <FloatBar pos="top-[99px] left-[84px]" names={["u3", "u4"]} />
          <FloatBar pos="top-[102px] left-[141px]" names={["m1", "m2", "m3", "m4", "m5", "|", "m6", "m7"]} />
          <Sheet />
          <Palette />
          <svg viewBox="0 -10 130 140" className="absolute bottom-[7px] left-[11px] h-[140px] w-[130px]" fill="none" stroke="#222" aria-label="UCS">
            <path d="M2.500 108.500h14v14h-14zM9.500 108V48M16 115.500h60M2.500 48.500h14L9.500 31zM76.500 109v13l17-6.500z" />
            <path d="M9.500 34v14M7.500 40l-2 8M11.500 40l2 8M78 113.500l10 2-10 2" stroke="#999" strokeWidth=".7" />
            <g fill="#333" stroke="none" fontFamily="Open Sans" fontWeight="300" fontSize="24" textAnchor="middle"><text x="11" y="19">Y</text><text x="113" y="124">X</text></g>
          </svg>
          <svg viewBox="0 0 82 42" className="absolute bottom-0 left-[243px] h-[42px] w-[82px]" fill="none" stroke="#000" aria-hidden="true"><path d="M40.500 0v42M0 40.500h82M38 38.500h5v3h-5z" /></svg>
        </div>
        <div className={`flex w-[14px] shrink-0 flex-col ${dither}`}>
          <Arrow d="up" /><span className={`size-[13px] ${raised}`} /><span className="flex-1" /><Arrow d="down" />
        </div>
      </div>
      <div className="flex h-[13px] shrink-0 bg-[#d4d0c8]">
        <div className="flex w-[900px] items-center" role="tablist">
          {["left", "left", "right", "right"].map((d, i) => (
            <button type="button" key={i} aria-label={`tab ${i}`} className="flex h-[12px] w-[12px] items-center justify-center border-r border-[#999]">
              {i === 0 && <span className="h-[7px] w-px bg-[#777]" />}<Tri d={d} c="fill-[#777]" />{i === 3 && <span className="h-[7px] w-px bg-[#777]" />}
            </button>
          ))}
          <Tab on>模型</Tab><Tab>布局1</Tab><Tab>布局2</Tab>
        </div>
        <div className={`flex flex-1 ${dither}`}><Arrow d="left" /><span className="flex-1" /><span className={`size-[13px] ${raised}`} /><Arrow d="right" /></div>
        <span className="w-[14px]" />
      </div>
    </section>
  );
}

function Command() {
  return (
    <section className="mr-[4px] flex h-[50px] shrink-0 bg-white text-[13px] text-[#222]">
      <div className="w-[11px] shrink-0 bg-[#a2a2a2] pt-[3px]"><span className="block h-[3px] w-2 bg-[repeating-linear-gradient(90deg,#777_0_1px,#333_1px_2px)]" /></div>
      <div className="flex min-w-0 flex-1 flex-col">
        <div className="flex h-[33px] border-b border-[#999]">
          <pre className={`flex-1 pl-[2px] text-[13px] leading-[13px] ${F}`}>{"共发现  0  个错误,   已修复  0  个\n已删除  0  个对象"}</pre>
          <div className={`flex w-[13px] flex-col justify-between ${dither}`}><Arrow d="up" /><Arrow d="down" /></div>
        </div>
        <div className="flex flex-1 items-center">
          <label htmlFor="cmd" className={`pl-[2px] text-[13px] leading-4 ${F}`}>命令:</label>
          <input id="cmd" className="h-4 min-w-0 flex-1 px-1 outline-none" />
          <div className={`flex w-[52px] ${dither}`}><Arrow d="left" /><span className={`size-[13px] ${raised}`} /><span className="flex-1" /><Arrow d="right" /></div>
          <span className="w-[13px] self-stretch bg-[#d4d0c8]" />
        </div>
      </div>
    </section>
  );
}

const tree = [["平面图", 1], ["分析评估", 1], ["剖面图", 1], ["柱状图", 1], ["原位曲线", 1], ["室内试验", 1], ["水文试验", 1], ["打印工具", 1], ["保存成果文件", 0], ["设置签署信息", 0], ["辅助工具", 1], ["返回数据管理", 0], ["帮助", 0]];

function SidePanel() {
  return (
    <aside className={`mb-[3px] w-[173px] shrink-0 border-l border-[#999] bg-[#efefef] text-[10px] text-black ${F}`}>
      <header className="flex h-[15px] items-center gap-1 bg-[#9c9c9c] pt-px pl-[2px]">
        <span className="h-[9px] w-[3px] bg-[repeating-linear-gradient(#eee_0_1px,#444_1px_3px)]" />
        <h2 className="text-[10px] font-bold">理正CAD功能面板</h2>
      </header>
      <p className="border-b-2 border-[#8a8a8a] pt-[2px] pb-px pl-[4px] leading-4">【勘察CAD】</p>
      <ul className="pt-[3px]">
        {tree.map(([t, k]) => (
          <li key={t} className="flex h-[15px] items-center">
            <span className="flex w-[17px] pl-[2px]">{k ? <svg viewBox="0 0 5 10" className="h-[10px] w-[5px]" aria-hidden="true"><path d="M0 0l5 5-5 5z" /></svg> : null}</span>
            <a href="#" className="leading-[15px]">{t}</a>
          </li>
        ))}
      </ul>
    </aside>
  );
}

const SBtn = ({ n, on, w = "w-[18px]" }) => (
  <button type="button" aria-label={n} className={`flex h-[18px] ${w} shrink-0 items-center justify-center border-r border-[#666] ${on ? "bg-[#bfe0ee]" : "bg-[#b4b4b4]"}`}><Icon n={n} s="size-[14px]" /></button>
);

function Status() {
  const st = `flex h-[12px] shrink-0 items-center bg-[#adadad] text-[10px] leading-[12px] text-[#111] ${F}`;
  return (
    <footer className="flex h-[13px] shrink-0 items-start justify-between overflow-hidden border-t border-[#444] bg-[#7e7e7e]">
      <div className="flex items-start">
        <span className="flex h-[12px] w-[180px] items-center bg-gradient-to-b from-[#9a9a9a] to-[#808080] pl-[7px] font-['Liberation_Sans',sans-serif] text-[10px] leading-[12px] text-[#111]">1869.1632, 459.8761, 0.0000</span>
        <SBtn n="snap" /><SBtn n="grid" /><SBtn n="ortho" w="w-[19px]" /><SBtn n="polar" on /><SBtn n="osnap" on w="w-[19px]" /><SBtn n="otrack" /><SBtn n="ducs" on w="w-[19px]" /><SBtn n="dyn" on /><SBtn n="lwt" w="w-[19px]" /><SBtn n="qp" on />
      </div>
      <div className="flex items-start">
        <button type="button" className={`${st} w-[25px] justify-center border-r border-[#666]`}>模型</button>
        <SBtn n="layo" /><SBtn n="lays" /><span className="w-[15px]" />
        <SBtn n="pan" /><SBtn n="zoom" /><SBtn n="gear" /><SBtn n="show" /><span className="w-[14px]" />
        <button type="button" className={`${st} w-[46px] gap-[2px] pl-[2px]`}><Icon n="ann" s="size-[12px]" />1:1<Tri /></button>
        <SBtn n="annb" /><SBtn n="anng" /><span className="w-[5px]" />
        <button type="button" className={`${st} w-[94px] gap-[2px] pl-[2px] whitespace-nowrap`}><Icon n="gear" s="size-[12px]" />AutoCAD 经典 <Tri /></button>
        <SBtn n="unlock" w="w-[20px]" /><span className={`${st} w-[10px] justify-center`}><Tri /></span><SBtn n="clean" w="w-[14px]" />
      </div>
    </footer>
  );
}

export default function App() {
  return (
    <main className="relative flex h-screen flex-col overflow-hidden bg-[#696969] font-['Noto_Sans_CJK_SC',sans-serif]">
      <Header />
      <Toolbars />
      <div className="flex min-h-0 flex-1">
        <div className="flex min-w-0 flex-1 flex-col">
          <div className="flex min-h-0 flex-1 pb-[2px]">
            <div className="-ml-[2px] w-[20px]"><VBar names={drawTools} h="h-[350px]" /></div>
            <div className="flex min-w-0 flex-1 pl-[3px]"><Viewport /></div>
            <div className="flex w-[30px] shrink-0 flex-col pr-[6px] pl-[4px]"><VBar names={modTools} h="h-[314px]" /><VBar names={["ord1", "ord2", "ord3", "ord4"]} h="h-[74px]" /></div>
          </div>
          <Command />
        </div>
        <SidePanel />
      </div>
      <Status />
      <div className="absolute top-[566px] -right-[27px] flex size-[38px] items-center rounded-full border-2 border-[#e4e4e4] bg-gradient-to-b from-[#86cba0] to-[#5c9050] pl-[3px] font-['Liberation_Sans',sans-serif] text-[10px] font-bold text-white shadow-[0_1px_5px_#777]">2</div>
    </main>
  );
}
